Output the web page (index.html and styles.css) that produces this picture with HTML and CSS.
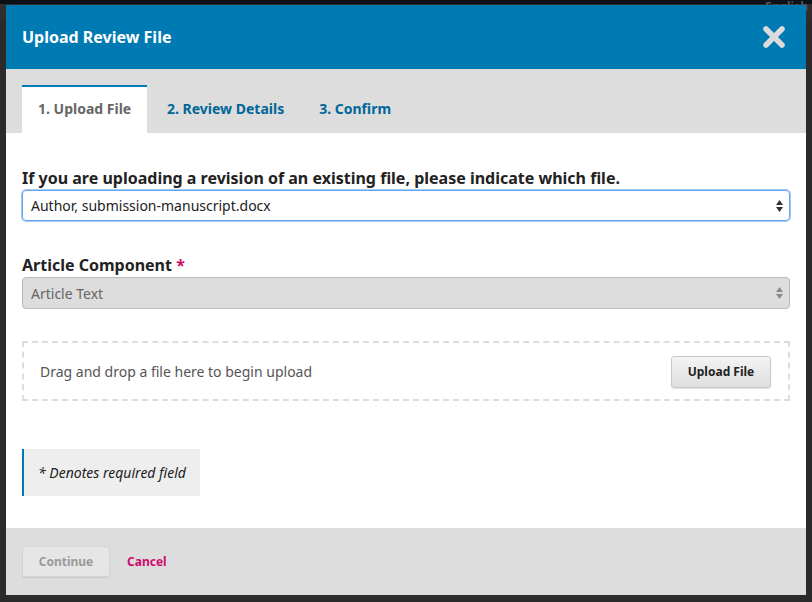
FILE: index.html
```html
<!DOCTYPE html>
<html>
<head>
<meta charset="utf-8">
<link rel="stylesheet" href="styles.css">
</head>
<body>
<div class="backdrop">
  <div class="topbar"><span class="lang">English</span></div>
</div>
<div class="modal">
  <div class="header">
    <h1 class="title">Upload Review File</h1>
    <button class="close" aria-label="Close">
      <svg width="22" height="22" viewBox="0 0 22 22"><path d="M3 3 L19 19 M19 3 L3 19" stroke="#dcdcdc" stroke-width="5.5" stroke-linecap="round"/></svg>
    </button>
  </div>
  <div class="tabs">
    <div class="tab active">1. Upload File</div>
    <div class="tab">2. Review Details</div>
    <div class="tab">3. Confirm</div>
  </div>
  <div class="body">
    <div class="field">
      <label class="label">If you are uploading a revision of an existing file, please indicate which file.</label>
      <div class="select focus"><span>Author, submission-manuscript.docx</span>
        <svg class="arrows" width="7" height="12" viewBox="0 0 7 12"><path d="M3.5 0 L7 5 L0 5 Z M0 7 L7 7 L3.5 12 Z" fill="#333"/></svg>
      </div>
    </div>
    <div class="field second">
      <label class="label">Article Component <span class="req">*</span></label>
      <div class="select disabled"><span>Article Text</span>
        <svg class="arrows" width="7" height="12" viewBox="0 0 7 12"><path d="M3.5 0 L7 5 L0 5 Z M0 7 L7 7 L3.5 12 Z" fill="#8a8a8a"/></svg>
      </div>
    </div>
    <div class="dropzone">
      <span class="droptext">Drag and drop a file here to begin upload</span>
      <button class="btn upload">Upload File</button>
    </div>
    <div class="note">* Denotes required field</div>
  </div>
  <div class="footer">
    <button class="btn continue">Continue</button>
    <a class="cancel">Cancel</a>
  </div>
</div>
</body>
</html>
```
FILE: styles.css
```css
* { box-sizing: border-box; }
html, body { margin: 0; padding: 0; }
body {
  width: 812px; height: 602px; overflow: hidden;
  background: #2b2b2b;
  font-family: "Noto Sans", "Liberation Sans", sans-serif;
  position: relative;
}
.backdrop { height: 602px; }
.topbar {
  height: 21px; background: #0b1016;
  border-bottom: 17px solid #2e2e2e;
  display: flex; justify-content: flex-end;
}
.lang { color: #555; font-size: 12px; font-weight: bold; padding: 0; margin-right: 4px; line-height: 14px; }
.modal {
  position: absolute; left: 6px; top: 5px; width: 800px; height: 590px;
  background: #fff; display: flex; flex-direction: column;
}
.header {
  height: 64px; background: #007ab2;
  display: flex; align-items: center; justify-content: space-between;
  padding: 0 21px 0 16px;
}
.title { margin: 0; color: #fff; font-size: 16px; font-weight: bold; line-height: 20px; margin-top: -1px; }
.close { background: none; border: 0; padding: 0; width: 22px; height: 22px; display: block; }
.close svg { display: block; }
.tabs {
  height: 64px; background: #ddd;
  display: flex; align-items: flex-end; padding-left: 16px;
}
.tab {
  height: 48px; padding: 0 18px 0 20px; display: flex; align-items: center;
  color: #006798; font-size: 14px; font-weight: bold; padding-bottom: 2px;
}
.tab.active {
  background: #fff; color: #666; border-top: 2px solid #007ab2;
  width: 125px; padding: 0 0 4px 16px;
}
.tab + .tab { padding-left: 20px; padding-right: 15px; }
.body { flex: 1; padding: 35px 16px 0 16px; }
.field { display: flex; flex-direction: column; }
.field.second { margin-top: 34px; }
.label { font-size: 16px; font-weight: bold; color: #222; line-height: 20px; margin-bottom: 2px; }
.req { color: #d00a6c; }
.select {
  height: 31px; border: 1px solid #bbb; border-radius: 4px;
  display: flex; align-items: center; justify-content: space-between;
  padding: 0 6px 0 8px; font-size: 14px; color: #222;
}
.select.focus { border: 1px solid #64a5f0; box-shadow: 0 0 0 1px #a6cbf5; }
.select.disabled { background: #ddd; color: #666; height: 32px; }
.arrows { display: block; flex: none; }
.dropzone {
  margin-top: 32px; height: 60px; border: 2px dashed #ddd;
  display: flex; align-items: center; justify-content: space-between;
  padding: 0 17px 0 16px;
}
.droptext { font-size: 14px; color: #555; }
.btn {
  font-family: inherit; font-weight: bold; font-size: 12px; color: #222;
  background: linear-gradient(#f4f4f4, #dedede);
  border: 1px solid #c8c8c8; border-radius: 3px;
  box-shadow: 0 1px 1px rgba(0,0,0,0.12);
}
.upload { width: 100px; height: 32px; margin-top: 1px; }
.note {
  margin-top: 48px; width: 178px; height: 47px; background: #eee;
  border-left: 2px solid #007ab2;
  display: flex; align-items: center; padding-left: 14px;
  font-size: 14px; font-style: italic; color: #222;
}
.footer {
  height: 67px; background: #ddd;
  display: flex; align-items: center; padding: 0 16px;
}
.continue {
  width: 88px; height: 31px; font-size: 12px; color: #999;
  background: #e6e6e6; border: 1px solid #d4d4d4; box-shadow: 0 1px 1px rgba(0,0,0,0.08);
  margin-top: -1px;
}
.cancel { margin-left: 17px; color: #d00a6c; font-size: 12px; font-weight: bold; }
```
